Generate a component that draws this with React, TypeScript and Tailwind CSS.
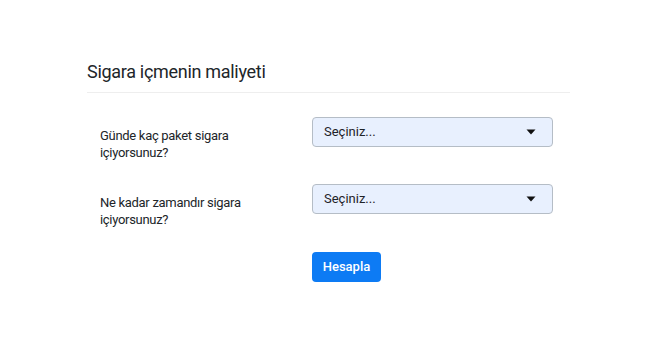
import React from 'react';

const questions = [
  { id: 'paket', label: 'Günde kaç paket sigara içiyorsunuz?' },
  { id: 'sure', label: 'Ne kadar zamandır sigara içiyorsunuz?' },
];

const Caret = () => (
  <svg width="10" height="6" viewBox="0 0 10 6" className="shrink-0">
    <path d="M0.5 0.5 L9.5 0.5 L5 5.5 Z" fill="#111" />
  </svg>
);

const SelectBox = () => (
  <div className="flex h-[30px] w-[241px] items-center justify-between rounded-[4px] border border-[#b5bdc6] bg-[#e8f0fe] pl-[11px] pr-[16px] text-[13px] text-[#1f2328]">
    <span>Seçiniz...</span>
    <Caret />
  </div>
);

export default function App() {
  return (
    <div className="min-h-[360px] w-[650px] bg-white font-['Roboto','Liberation_Sans',sans-serif] text-[#212529]">
      <div className="ml-[87px] w-[483px] pt-[60px]">
        <h1 className="border-b border-[#eeeeee] pb-[8px] text-[18px] leading-[24px] font-normal tracking-[-0.3px]">
          Sigara içmenin maliyeti
        </h1>

        <div className="mt-[24px] flex flex-col gap-[23px]">
          {questions.map((q) => (
            <div key={q.id} className="flex items-start">
              <label className="w-[225px] pl-[13px] pr-[30px] pt-[10px] text-[13px] leading-[17px] tracking-[-0.3px]">
                {q.label}
              </label>
              <SelectBox />
            </div>
          ))}
        </div>

        <div className="mt-[24px] pl-[225px]">
          <button className="h-[30px] w-[69px] rounded-[4px] bg-[#0d7bf4] text-[13px] font-medium text-white">
            Hesapla
          </button>
        </div>
      </div>
    </div>
  );
}
